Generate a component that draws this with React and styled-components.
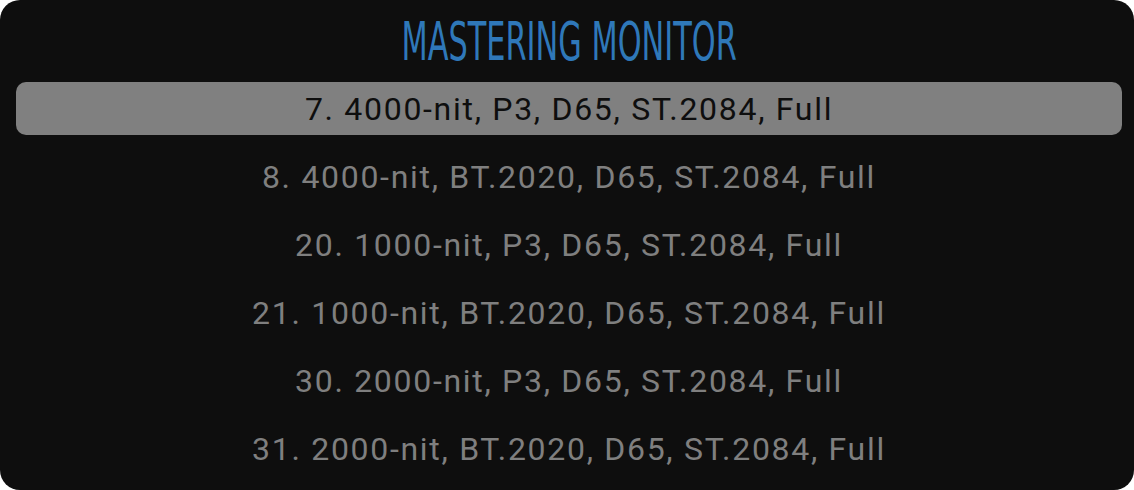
import React from 'react'
import styled, { createGlobalStyle } from 'styled-components'

const GlobalStyle = createGlobalStyle`
  html, body {
    margin: 0;
    padding: 0;
    background: #ffffff;
  }
`

const Panel = styled.div`
  width: 1134px;
  height: 490px;
  box-sizing: border-box;
  background: #0e0e0e;
  border-radius: 20px;
  padding: 0 12px 15px 16px;
  display: flex;
  flex-direction: column;
`

const Title = styled.h1`
  margin: 0;
  height: 82px;
  display: flex;
  align-items: center;
  justify-content: center;
  font-family: "DejaVu Sans", sans-serif;
  font-stretch: condensed;
  font-weight: 400;
  font-size: 54px;
  color: #2f78b9;
  letter-spacing: 0;
  span {
    display: inline-block;
    transform: scaleX(0.625);
    white-space: nowrap;
  }
`

const List = styled.div`
  display: flex;
  flex-direction: column;
  gap: 15px;
`

const Row = styled.div`
  height: 53px;
  border-radius: 10px;
  display: flex;
  align-items: center;
  justify-content: center;
  font-family: "Roboto", sans-serif;
  font-size: 32px;
  letter-spacing: 1.7px;
  background: ${p => (p.$active ? '#808080' : 'transparent')};
  color: ${p => (p.$active ? '#0e0e0e' : '#7f7f7f')};
`

const items = [
  '7. 4000-nit, P3, D65, ST.2084, Full',
  '8. 4000-nit, BT.2020, D65, ST.2084, Full',
  '20. 1000-nit, P3, D65, ST.2084, Full',
  '21. 1000-nit, BT.2020, D65, ST.2084, Full',
  '30. 2000-nit, P3, D65, ST.2084, Full',
  '31. 2000-nit, BT.2020, D65, ST.2084, Full',
]

const App = () => {
  return (
    <>
      <GlobalStyle />
      <Panel>
        <Title><span>MASTERING MONITOR</span></Title>
        <List>
          {items.map((t, i) => (
            <Row key={t} $active={i === 0}>{t}</Row>
          ))}
        </List>
      </Panel>
    </>
  )
}

export default App
